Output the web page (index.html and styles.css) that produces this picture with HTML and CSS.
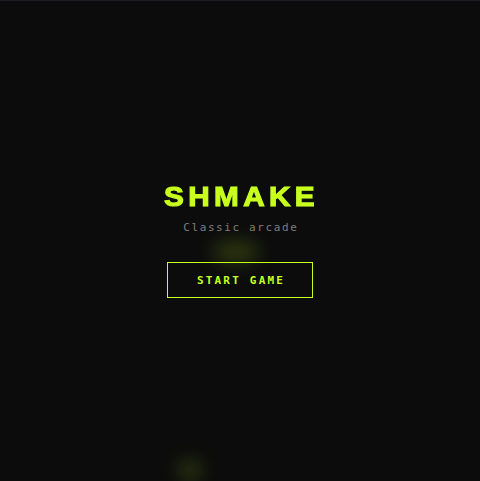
FILE: index.html
```html
<!DOCTYPE html>
<html lang="en">
<head>
<meta charset="utf-8">
<title>SHMAKE</title>
<link rel="stylesheet" href="styles.css">
</head>
<body>
<main class="screen">
  <span class="glow glow-a"></span>
  <span class="glow glow-b"></span>
  <section class="menu">
    <h1 class="title">SHMAKE</h1>
    <p class="tagline">Classic arcade</p>
    <button class="start" type="button">START GAME</button>
  </section>
</main>
</body>
</html>
```
FILE: styles.css
```css
html, body {
  margin: 0;
  padding: 0;
  background: #0c0c0c;
}

.screen {
  position: relative;
  box-sizing: border-box;
  height: 481px;
  border-top: 1px solid #1b1b22;
  overflow: hidden;
  display: flex;
  align-items: center;
  justify-content: center;
}

.menu {
  display: flex;
  flex-direction: column;
  align-items: center;
  margin-top: -2px;
}

.title {
  margin: 0;
  font-family: "Liberation Sans", Arial, sans-serif;
  font-weight: 900;
  font-size: 27px;
  line-height: 30px;
  letter-spacing: 4px;
  margin-right: -4px;
  color: #c8ff1e;
  transform: scaleX(1.1);
  -webkit-text-stroke: 1.1px #c8ff1e;
}

.tagline {
  margin: 9px 0 0;
  font-family: "DejaVu Sans Mono", monospace;
  font-size: 11px;
  line-height: 14px;
  letter-spacing: 1.6px;
  margin-right: -1.6px;
  color: #7d7d7d;
}

.start {
  margin-top: 27px;
  width: 146px;
  height: 36px;
  background: transparent;
  border: 1px solid #c8ff1e;
  color: #c8ff1e;
  font-family: "DejaVu Sans Mono", monospace;
  font-weight: bold;
  font-size: 11px;
  letter-spacing: 2.2px;
  padding: 0 0 0 2px;
  cursor: pointer;
}

.glow {
  position: absolute;
  border-radius: 50%;
  background: rgba(170, 220, 30, 0.2);
  filter: blur(9px);
}

.glow-a {
  left: 212px;
  top: 239px;
  width: 48px;
  height: 24px;
}

.glow-b {
  left: 178px;
  top: 458px;
  width: 24px;
  height: 22px;
}
```
